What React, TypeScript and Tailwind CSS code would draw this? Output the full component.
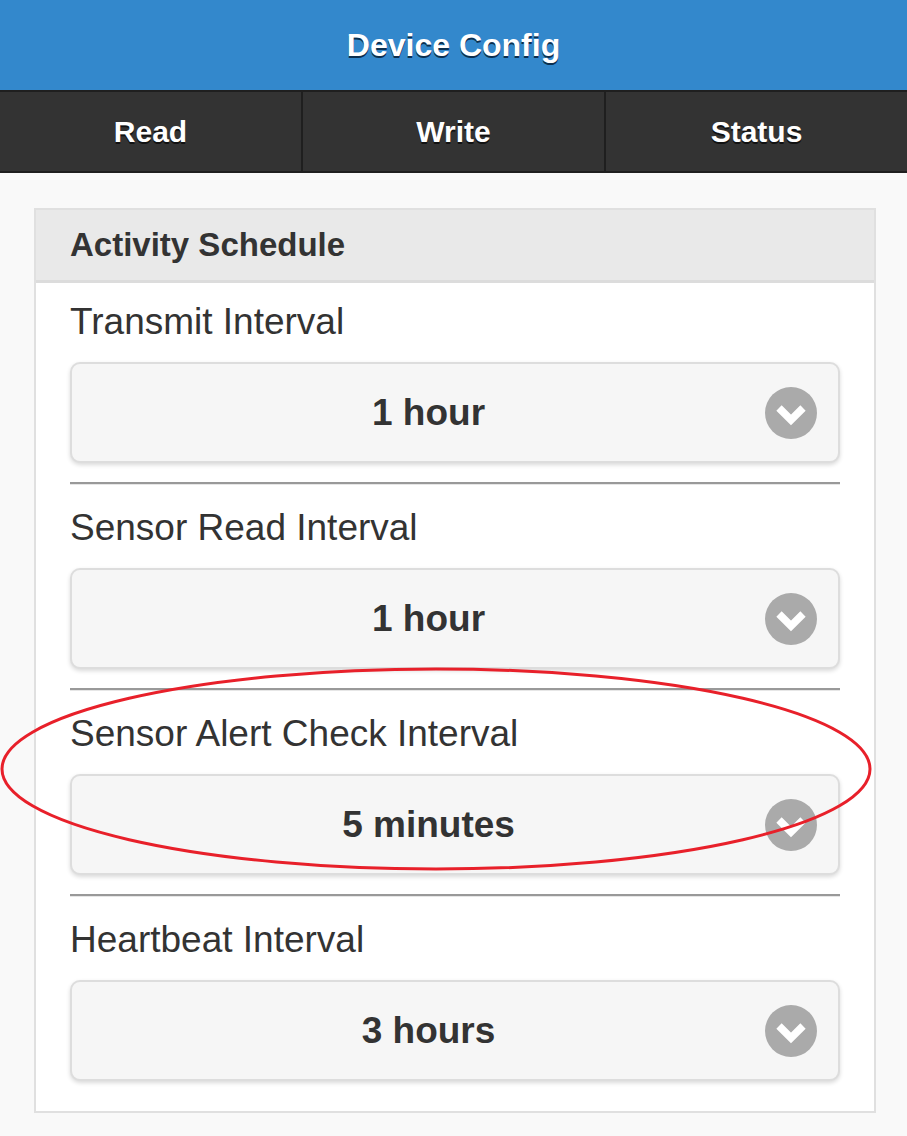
const fields = [
  { label: "Transmit Interval", value: "1 hour" },
  { label: "Sensor Read Interval", value: "1 hour" },
  { label: "Sensor Alert Check Interval", value: "5 minutes" },
  { label: "Heartbeat Interval", value: "3 hours" },
];

function CaretDown() {
  return (
    <svg width="52" height="52" viewBox="0 0 52 52" className="shrink-0">
      <circle cx="26" cy="26" r="26" fill="#aaaaaa" />
      <polyline
        points="14,21 26,33 38,21"
        fill="none"
        stroke="#fff"
        strokeWidth="7.5"
        strokeLinejoin="miter"
      />
    </svg>
  );
}

function SelectField({ label, value }: { label: string; value: string }) {
  return (
    <div>
      <div className="text-[37px] leading-[44px] text-[#333]">{label}</div>
      <div className="mt-[18px] flex h-[101px] items-center rounded-[10px] border-2 border-[#dddddd] bg-[#f6f6f6] pl-[20px] pr-[21px] shadow-[0_2px_4px_rgba(0,0,0,0.15)]">
        <span className="flex-1 text-center text-[37px] font-bold text-[#333]">{value}</span>
        <CaretDown />
      </div>
    </div>
  );
}

export default function App() {
  return (
    <div className="relative min-h-[1136px] bg-[#f9f9f9] [font-family:'Liberation_Sans',Arial,sans-serif]">
      <header className="flex h-[90px] items-center justify-center bg-[#3388cc]">
        <h1 className="text-[32px] font-bold text-white [text-shadow:0_2px_0_#0b2f4f]">Device Config</h1>
      </header>
      <nav className="flex h-[83px] border-y-2 border-[#1f1f1f] bg-[#333]">
        {["Read", "Write", "Status"].map((t, i) => (
          <div
            key={t}
            className={
              "flex flex-1 items-center justify-center text-[30px] font-bold text-white [text-shadow:0_2px_0_#111] " +
              (i < 2 ? "border-r-2 border-[#1f1f1f]" : "")
            }
          >
            {t}
          </div>
        ))}
      </nav>

      <section className="ml-[34px] mr-[31px] mt-[35px] border-2 border-[#e0e0e0] bg-white">
        <div className="border-b-[3px] border-[#dcdcdc] bg-[#e9e9e9] px-[34px] pb-[15px] pt-[15px] text-[33px] font-bold leading-[40px] text-[#333]">
          Activity Schedule
        </div>
        <div className="px-[34px] pb-[30px] pt-[17px]">
          {fields.map((f, i) => (
            <div key={f.label}>
              {i > 0 && <div className="mb-[21px] mt-[19px] border-t-2 border-[#999] border-b border-b-[#e6e6e6]" />}
              <SelectField label={f.label} value={f.value} />
            </div>
          ))}
        </div>
      </section>

      {/* annotation drawn over the form */}
      <svg className="pointer-events-none absolute left-0 top-[664px]" width="907" height="212" viewBox="0 0 907 212">
        <ellipse cx="436" cy="105" rx="434" ry="100" fill="none" stroke="#e8202a" strokeWidth="3" />
      </svg>
    </div>
  );
}
